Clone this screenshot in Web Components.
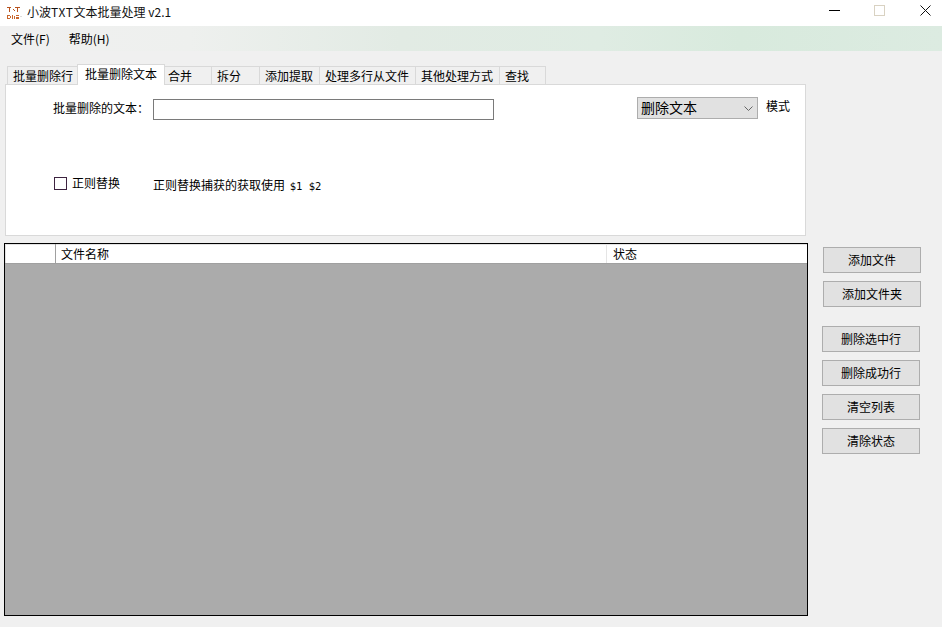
<!DOCTYPE html>
<html>
<head>
<meta charset="utf-8">
<title>小波TXT文本批量处理</title>
<style>
  html, body { margin: 0; padding: 0; background: #f0f0f0; }
  body { font: 12px "Noto Sans CJK SC", "Liberation Sans", sans-serif; color: #000; overflow: hidden; }
</style>
</head>
<body>
<app-window></app-window>
<script>
const fontStack = '"Noto Sans CJK SC", "Liberation Sans", sans-serif';

class TitleBar extends HTMLElement {
  constructor() {
    super();
    this.attachShadow({ mode: 'open' }).innerHTML = `
      <style>
        :host { display: flex; align-items: center; height: 26px; background: #fff; }
        .logo { width: 16px; height: 16px; margin: 0 5px 0 6px; flex: none; }
        .name { flex: 1; font-size: 12px; line-height: 16px; color: #111; padding-bottom: 3px; }
        .ctl { width: 45px; height: 26px; display: flex; align-items: center; justify-content: center; flex: none; padding-bottom: 6px; box-sizing: border-box; }
        .ctl.close { width: 40px; padding-left: 6px; }
        svg { display: block; }
      </style>
      <svg class="logo" viewBox="0 0 16 16" shape-rendering="crispEdges">
        <g fill="#b8531f">
          <rect x="1" y="2" width="4" height="1"/><rect x="2.500" y="3" width="1" height="4"/>
          <rect x="6.500" y="4" width="1" height="1"/><rect x="7.500" y="5" width="1" height="1"/>
          <rect x="9" y="2" width="5" height="1"/><rect x="11" y="3" width="1" height="4"/>
        </g>
        <g fill="#c9672e">
          <rect x="1" y="10" width="3" height="1"/><rect x="1" y="13" width="3" height="1"/>
          <rect x="1" y="11" width="1" height="2"/><rect x="4" y="11" width="1" height="2"/>
          <rect x="6" y="10" width="1" height="4"/><rect x="8" y="11" width="1" height="3"/>
          <rect x="10" y="10" width="3" height="1"/><rect x="10" y="12" width="3" height="1"/>
          <rect x="10" y="13" width="3" height="1"/>
        </g>
        <rect x="14" y="11" width="2" height="1" fill="#ddd"/>
      </svg>
      <span class="name"><slot></slot></span>
      <span class="ctl"><svg width="11" height="11" viewBox="0 0 11 11"><path d="M0 5.500H11" stroke="#000" fill="none"/></svg></span>
      <span class="ctl"><svg width="11" height="11" viewBox="0 0 11 11"><rect x=".5" y=".5" width="10" height="10" stroke="#d9d2c2" fill="none"/></svg></span>
      <span class="ctl close"><svg width="11" height="11" viewBox="0 0 11 11"><path d="M.5 .5L10.500 10.500M10.500 .5L.5 10.500" stroke="#111" fill="none"/></svg></span>`;
  }
}

class MenuBar extends HTMLElement {
  constructor() {
    super();
    this.attachShadow({ mode: 'open' }).innerHTML = `
      <style>
        :host {
          display: flex; align-items: center; gap: 19px; height: 25px; padding: 0 0 1px 11px; box-sizing: border-box;
          background: linear-gradient(90deg, #f0f0f0 0, #eef0ee 190px, #e2ebe4 400px, #dfece3 600px, #d8eadd 740px, #dcebe1 942px);
          font-size: 12px;
        }
      </style>
      <slot></slot>`;
  }
}

class TabItem extends HTMLElement {
  constructor() {
    super();
    this.attachShadow({ mode: 'open' }).innerHTML = `
      <style>
        :host {
          display: block; box-sizing: border-box; height: 18px; padding: 0 0 0 5px;
          border: 1px solid #d9d9d9; border-bottom: 0; margin-left: -1px; background: #f0f0f0;
          font-size: 12px; line-height: 18px; white-space: nowrap;
        }
        :host([active]) { height: 21px; margin-bottom: -1px; background: #fff; padding-left: 7px; position: relative; z-index: 1; }
      </style>
      <slot></slot>`;
  }
}

class TabStrip extends HTMLElement {
  constructor() {
    super();
    this.attachShadow({ mode: 'open' }).innerHTML = `
      <style>
        :host { display: flex; align-items: flex-end; height: 20px; padding-left: 4px; position: relative; z-index: 1; }
      </style>
      <slot></slot>`;
  }
}

class ReplacePanel extends HTMLElement {
  constructor() {
    super();
    this.attachShadow({ mode: 'open' }).innerHTML = `
      <style>
        :host {
          display: block; box-sizing: border-box; height: 152px; margin: 0 2px 0 1px; background: #fff;
          border: 1px solid #d9d9d9; font-size: 12px;
        }
        .row1 { display: flex; align-items: flex-start; padding: 12px 0 0 47px; }
        .lbl { width: 100px; margin-top: 2px; line-height: 18px; }
        .input { width: 341px; height: 21px; box-sizing: border-box; border: 1px solid #7a7a7a; margin-top: 2px; background: #fff; }
        .select {
          display: flex; align-items: center; justify-content: space-between; box-sizing: border-box;
          width: 121px; height: 22px; margin-left: 143px; padding: 0 4px 2px 3px;
          background: #e1e1e1; border: 1px solid #adadad; font-size: 14px; line-height: 18px;
        }
        .select svg { margin-top: 2px; }
        .mode { margin-left: 8px; line-height: 18px; }
        .row2 { display: flex; align-items: flex-start; padding: 55px 0 0 48px; }
        .check { width: 13px; height: 13px; box-sizing: border-box; border: 1px solid #3d2340; margin-top: 2px; flex: none; }
        .check-lbl { width: 81px; margin-left: 5px; line-height: 15px; }
        .hint { margin-top: 1px; line-height: 18px; }
        .mono { font: 10.500px "DejaVu Sans Mono", "Liberation Mono", monospace; margin-left: 2px; }
      </style>
      <div class="row1">
        <span class="lbl">批量删除的文本：</span>
        <span class="input"></span>
        <span class="select">删除文本<svg width="9" height="5" viewBox="0 0 9 5"><path d="M.5 .5L4.500 4.500L8.500 .5" stroke="#666" fill="none"/></svg></span>
        <span class="mode">模式</span>
      </div>
      <div class="row2">
        <span class="check"></span>
        <span class="check-lbl">正则替换</span>
        <span class="hint">正则替换捕获的获取使用 <span class="mono">$1 $2</span></span>
      </div>`;
  }
}

class FileGrid extends HTMLElement {
  constructor() {
    super();
    this.attachShadow({ mode: 'open' }).innerHTML = `
      <style>
        :host {
          display: flex; flex-direction: column; box-sizing: border-box; height: 373px; margin-top: 7px;
          border: 1px solid #000; background: #ababab; font-size: 12px;
        }
        .head { display: flex; height: 20px; box-sizing: border-box; background: #fff; border-bottom: 1px solid #a0a0a0; line-height: 19px; box-shadow: inset 1px 1px 0 #e3e3e3; }
        .idx { width: 50px; flex: none; border-right: 1px solid #a0a0a0; }
        .name { width: 551px; flex: none; box-sizing: border-box; padding-left: 5px; border-right: 1px solid #e5e5e5; }
        .state { flex: 1; padding-left: 6px; }
      </style>
      <div class="head">
        <span class="idx"></span>
        <span class="name">文件名称</span>
        <span class="state">状态</span>
      </div>`;
  }
}

class ActionButton extends HTMLElement {
  constructor() {
    super();
    this.attachShadow({ mode: 'open' }).innerHTML = `
      <style>
        :host {
          display: flex; align-items: center; justify-content: center; box-sizing: border-box;
          width: 98px; height: 26px; padding-bottom: 2px; background: #e1e1e1; border: 1px solid #adadad; font-size: 12px;
        }
      </style>
      <slot></slot>`;
  }
}

class AppWindow extends HTMLElement {
  constructor() {
    super();
    this.attachShadow({ mode: 'open' }).innerHTML = `
      <style>
        :host { display: flex; flex-direction: column; width: 942px; height: 627px; background: #f0f0f0; font-family: ${fontStack}; overflow: hidden; }
        .work { display: flex; padding: 13px 0 0 4px; }
        .left { width: 804px; flex: none; }
        .side { display: flex; flex-direction: column; margin-left: 14px; padding-top: 183px; }
        .side .top { display: flex; flex-direction: column; gap: 8px; margin-left: 1px; margin-bottom: 19px; }
        .side .low { display: flex; flex-direction: column; gap: 8px; }
        .tx { letter-spacing: .6px; }
      </style>
      <title-bar>小波<span class="tx">TXT</span>文本批量处理 v2.1</title-bar>
      <menu-bar><span>文件(F)</span><span>帮助(H)</span></menu-bar>
      <div class="work">
        <div class="left">
          <tab-strip>
            <tab-item style="width:71px">批量删除行</tab-item>
            <tab-item active style="width:88px">批量删除文本</tab-item>
            <tab-item style="width:48px;padding-left:3px">合并</tab-item>
            <tab-item style="width:49px">拆分</tab-item>
            <tab-item style="width:61px">添加提取</tab-item>
            <tab-item style="width:97px">处理多行从文件</tab-item>
            <tab-item style="width:85px">其他处理方式</tab-item>
            <tab-item style="width:47px">查找</tab-item>
          </tab-strip>
          <replace-panel></replace-panel>
          <file-grid></file-grid>
        </div>
        <div class="side">
          <div class="top">
            <action-button>添加文件</action-button>
            <action-button>添加文件夹</action-button>
          </div>
          <div class="low">
            <action-button>删除选中行</action-button>
            <action-button>删除成功行</action-button>
            <action-button>清空列表</action-button>
            <action-button>清除状态</action-button>
          </div>
        </div>
      </div>`;
  }
}

customElements.define('title-bar', TitleBar);
customElements.define('menu-bar', MenuBar);
customElements.define('tab-item', TabItem);
customElements.define('tab-strip', TabStrip);
customElements.define('replace-panel', ReplacePanel);
customElements.define('file-grid', FileGrid);
customElements.define('action-button', ActionButton);
customElements.define('app-window', AppWindow);
</script>
</body>
</html>
